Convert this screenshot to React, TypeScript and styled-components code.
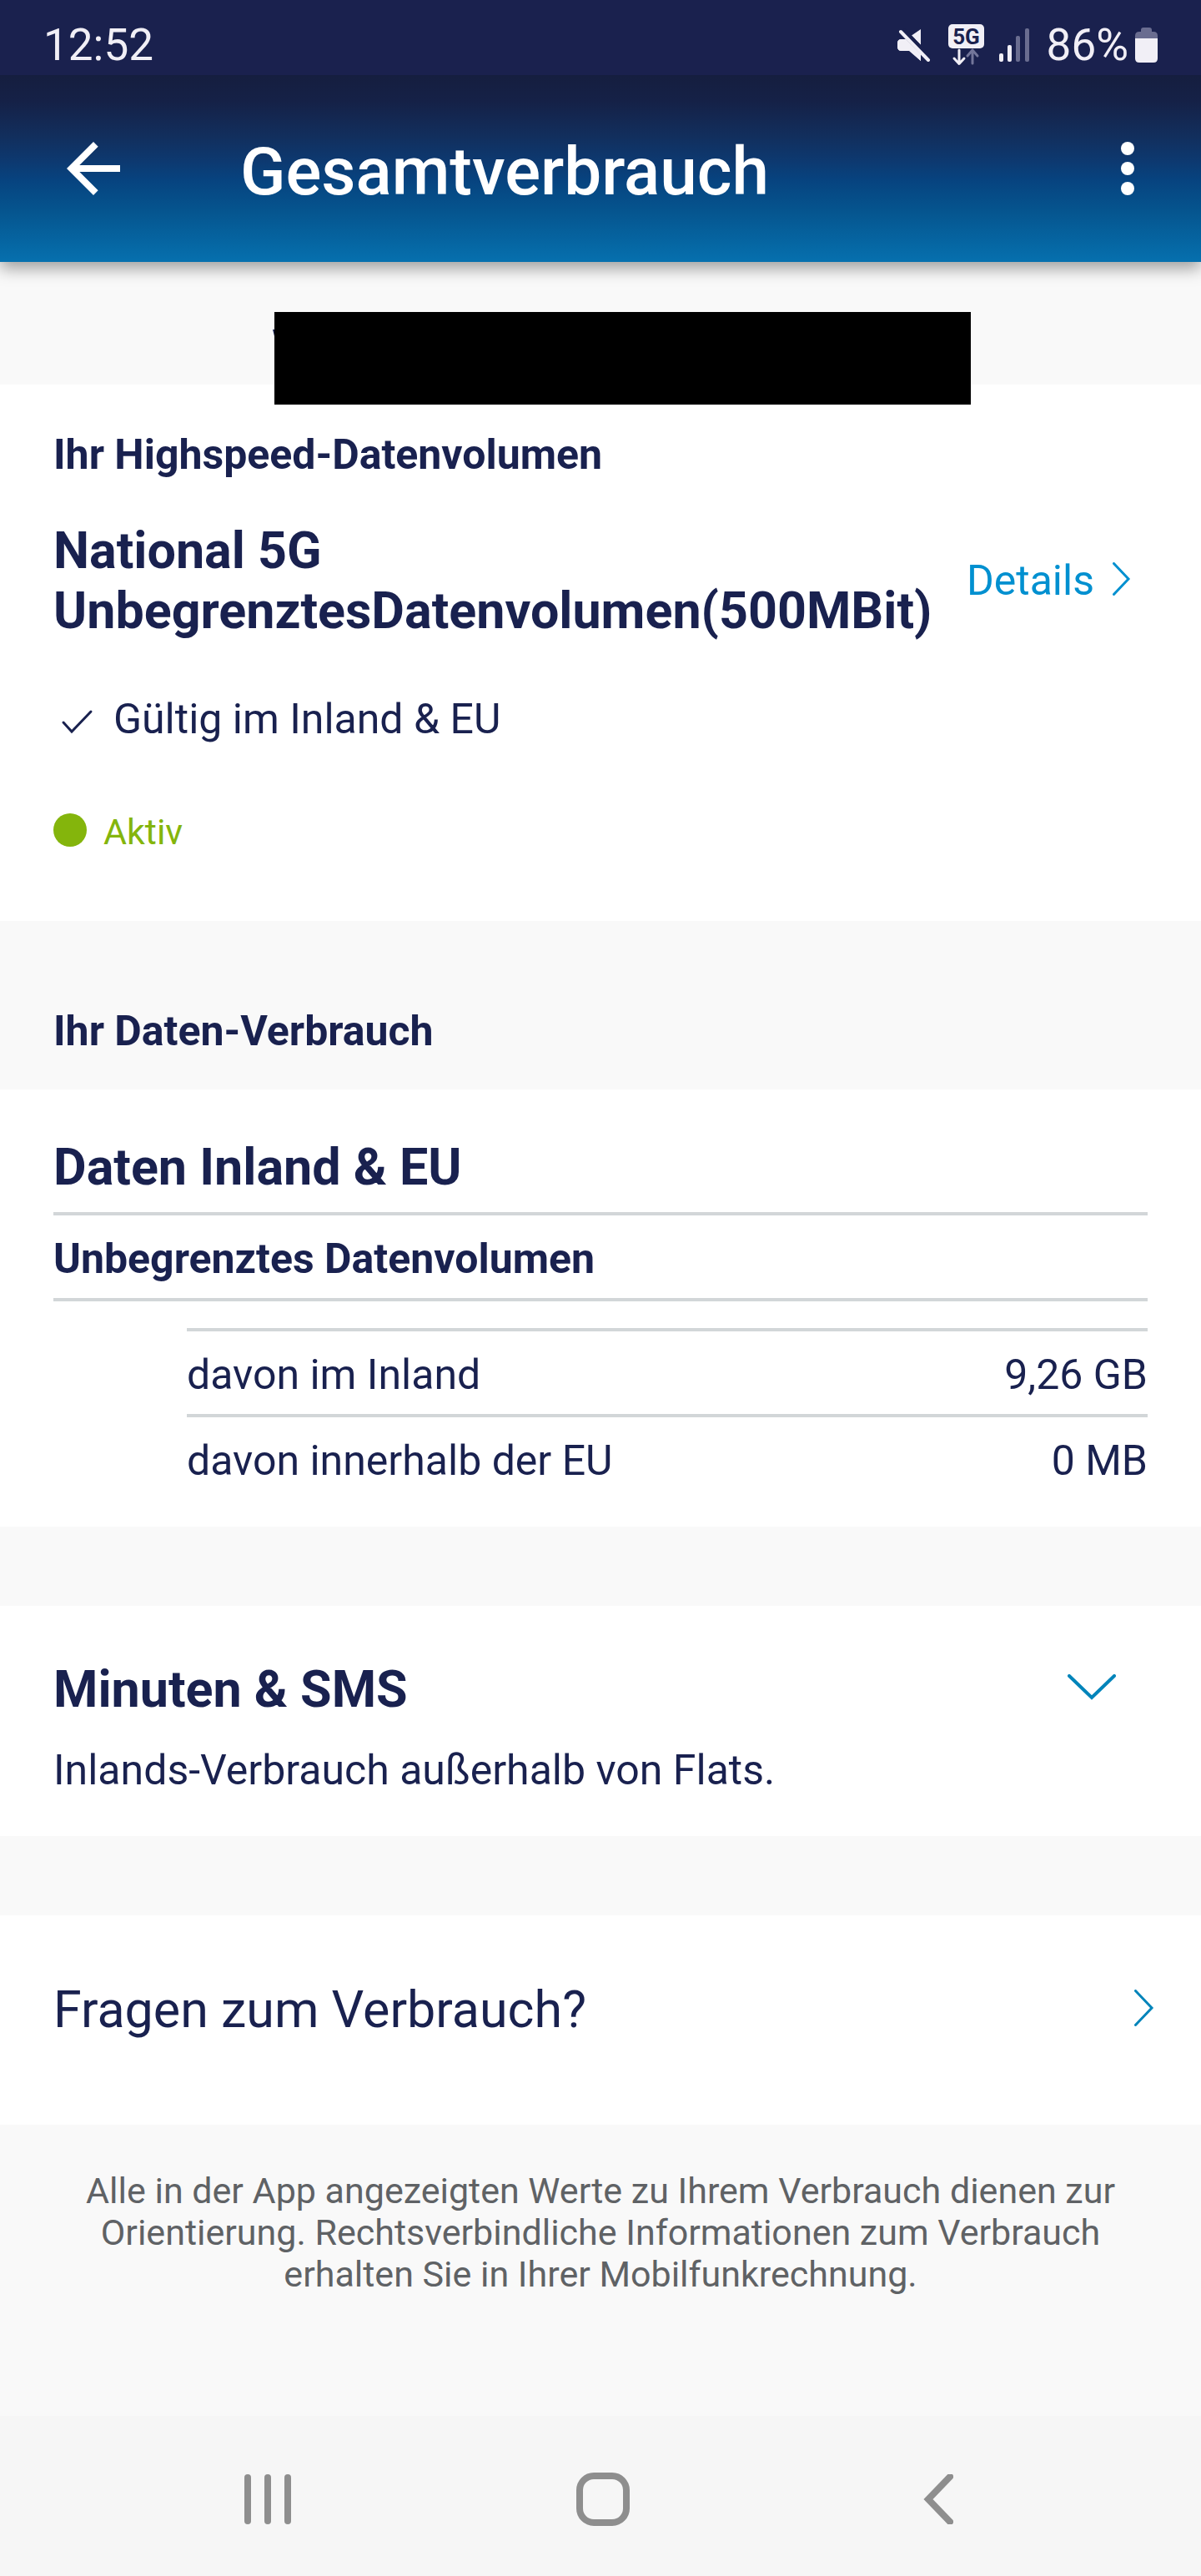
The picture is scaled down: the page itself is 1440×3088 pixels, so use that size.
import React, { useState } from "react";
import styled, { createGlobalStyle, ThemeProvider } from "styled-components";

const theme = {
  navy: "#19214f",
  link: "#0090d0",
  accent: "#0084ba",
  green: "#84b50c",
  rule: "#d2d6d8",
  canvas: "#f9f9f9",
  muted: "#5f6265",
  gutter: "64px",
};

const GlobalStyle = createGlobalStyle`
  *, *::before, *::after { box-sizing: border-box; }
  body {
    margin: 0;
    background: #f9f9f9;
    color: #19214f;
    font-family: Roboto, "Noto Sans", "Liberation Sans", sans-serif;
    font-size: 50px;
    line-height: 58px;
  }
  h1, h2, h3, p { margin: 0; }
  svg { display: block; flex: none; }
`;

const Page = styled.div`
  display: flex;
  flex-direction: column;
  min-height: 100vh;
`;

const StatusBar = styled.div`
  position: relative;
  z-index: 2;
  display: flex;
  align-items: center;
  justify-content: space-between;
  height: 90px;
  padding: 18px 52px 0;
  background: #1a214e;
  color: #f1eff6;
  font-size: 53px;
  line-height: 62px;
`;

const StatusIcons = styled.div`
  display: flex;
  align-items: center;
`;

const Battery = styled.span`
  display: flex;
  align-items: center;
  gap: 8px;
  margin-left: 21px;
`;

const AppBar = styled.header`
  position: relative;
  z-index: 1;
  display: flex;
  align-items: center;
  padding: 64px 40px;
  color: #fff;
  background: linear-gradient(
    to bottom,
    #151e3f 0%,
    #152147 14%,
    #122e5c 32%,
    #0d3970 46%,
    #07437f 56%,
    #05548e 72%,
    #0670ae 100%
  );
  box-shadow: 0 8px 18px rgba(0, 0, 0, 0.36);
`;

const IconButton = styled.button`
  display: flex;
  align-items: center;
  justify-content: center;
  padding: 0;
  border: 0;
  background: none;
  color: inherit;
`;

const BackButton = styled(IconButton)`
  margin: 0 128px 0 24px;
`;

const Title = styled.h1`
  flex: 1;
  padding-top: 8px;
  font-size: 80px;
  line-height: 88px;
  font-weight: 500;
`;

const Main = styled.main`
  flex: 1;
`;

const AccountStrip = styled.div`
  padding: 60px 276px 0 329px;
`;

/* The blacked-out account name hangs over the card below it. */
const Redaction = styled.div`
  position: relative;
  height: 111px;
  margin-bottom: -24px;
  background: #000;

  &::before {
    content: "";
    position: absolute;
    top: 21px;
    left: -2px;
    width: 2px;
    height: 8px;
    background: ${(p) => p.theme.navy};
    clip-path: polygon(0 0, 100% 0, 100% 100%);
  }
`;

const Card = styled.section<{ $top: number; $bottom: number }>`
  padding: ${(p) => p.$top}px ${(p) => p.theme.gutter} ${(p) => p.$bottom}px;
  background: #fff;

  & + & {
    margin-top: 95px;
  }
`;

const Label = styled.h2`
  font-size: 50px;
  line-height: 58px;
  font-weight: 700;
`;

const SectionLabel = styled(Label)`
  padding: 103px ${(p) => p.theme.gutter} 41px;
`;

const Heading = styled.h3`
  font-size: 61px;
  line-height: 72px;
  font-weight: 700;
`;

const SplitRow = styled.div<{ $end: number }>`
  display: flex;
  align-items: center;
  justify-content: space-between;
  padding-right: ${(p) => p.$end}px;
`;

const TariffRow = styled(SplitRow)`
  margin-top: 50px;
`;

const DetailsLink = styled.a`
  display: flex;
  align-items: center;
  gap: 22px;
  color: ${(p) => p.theme.link};
  text-decoration: none;
`;

const ChevronSvg = styled.svg`
  margin-bottom: 4px;
`;

const Validity = styled.p`
  display: flex;
  align-items: center;
  gap: 24px;
  margin-top: 65px;
  padding-left: 8px;
`;

const Status = styled.p`
  display: flex;
  align-items: center;
  gap: 20px;
  margin-top: 81px;
  color: ${(p) => p.theme.green};
  font-size: 43px;
  line-height: 50px;
`;

const Dot = styled.span`
  width: 40px;
  height: 40px;
  margin-bottom: 4px;
  border-radius: 50%;
  background: currentColor;
`;

const PlanName = styled.p`
  margin-top: 18px;
  padding: 23px 0 18px;
  border: solid ${(p) => p.theme.rule};
  border-width: 4px 0;
  font-weight: 700;
`;

const UsageTable = styled.table`
  width: calc(100% - 160px);
  margin: 32px 0 0 160px;
  border-spacing: 0;
`;

const usageCell = `
  padding: 23px 0 18px;
  border-top: 4px solid #d2d6d8;
  font-weight: 400;
`;

const UsageName = styled.th`
  ${usageCell}
  text-align: left;
`;

const UsageValue = styled.td`
  ${usageCell}
  text-align: right;
`;

const Note = styled.p`
  margin-top: 32px;
`;

const FaqLink = styled.a`
  display: flex;
  align-items: center;
  justify-content: space-between;
  margin-right: -8px;
  color: inherit;
  font-size: 61px;
  line-height: 72px;
  text-decoration: none;
`;

const Disclaimer = styled.p`
  padding: 54px 96px;
  color: ${(p) => p.theme.muted};
  font-size: 43px;
  line-height: 50px;
  text-align: center;
`;

const NavBar = styled.nav`
  display: grid;
  grid-template-columns: repeat(3, 1fr);
  height: 192px;
  padding: 8px 114px 0 120px;
  background: #f6f6f6;
  color: #8e8e8e;
`;

function MuteIcon() {
  return (
    <svg width="40" height="40" viewBox="0 0 40 40" fill="currentColor">
      <path d="M28 1v19L17 8.500zM5 13h5l18 18v8L15 27H5q-5 0-5-5v-4q0-5 5-5z" />
      <path d="M10 13L28 32v7L14 27H5q-5 0-5-5v-4q0-5 5-5z" />
      <path d="M7 1L40 35" stroke="#1a214e" strokeWidth="4" />
      <path d="M4 4l33 34" stroke="currentColor" strokeWidth="4" strokeLinecap="round" />
    </svg>
  );
}

function NetworkIcon() {
  return (
    <svg width="43" height="50" viewBox="0 0 43 50" style={{ marginLeft: 21 }}>
      <rect width="43" height="29" rx="5" fill="currentColor" />
      <text x="21.500" y="24" textAnchor="middle" fontSize="26" fontWeight="700" fill="#1a214e">
        5G
      </text>
      <g fill="none" strokeWidth="3" strokeLinecap="round" strokeLinejoin="round">
        <path d="M29 47V31m-6 7l6-7 6 7" stroke="#73769a" />
        <path d="M13 31v16m-6-6l6 6.500 6-6.500" stroke="currentColor" />
      </g>
    </svg>
  );
}

function SignalIcon() {
  return (
    <svg width="36" height="42" viewBox="0 0 36 42" fill="currentColor" style={{ marginLeft: 18 }}>
      <rect x="0" y="31" width="5" height="10" rx="2" />
      <rect x="10" y="21" width="5" height="20" rx="2" />
      <rect x="20" y="10" width="5" height="31" rx="2" fill="#6a6d90" />
      <rect x="31" y="1" width="5" height="40" rx="2" fill="#6a6d90" />
    </svg>
  );
}

function BatteryIcon() {
  return (
    <svg width="27" height="42" viewBox="0 0 27 42">
      <path d="M7 5V3q0-3 3-3h7q3 0 3 3v2h2q5 0 5 5v3H0v-3q0-5 5-5z" fill="#6a6d90" />
      <path d="M0 13h27v24q0 5-5 5H5q-5 0-5-5z" fill="currentColor" />
    </svg>
  );
}

type ChevronProps = { width: number; height: number; stroke: number; color: string; down?: boolean };

function Chevron({ width, height, stroke, color, down }: ChevronProps) {
  const h = stroke / 2;
  const d = down
    ? `M${h} ${h}L${width / 2} ${height - stroke}L${width - h} ${h}`
    : `M${h} ${h}L${width - stroke} ${height / 2}L${h} ${height - h}`;
  return (
    <ChevronSvg width={width} height={height} viewBox={`0 0 ${width} ${height}`}>
      <path d={d} fill="none" stroke={color} strokeWidth={stroke} strokeLinecap="round" />
    </ChevronSvg>
  );
}

const usage = [
  { name: "davon im Inland", value: "9,26 GB" },
  { name: "davon innerhalb der EU", value: "0 MB" },
];

export default function App() {
  const [open, setOpen] = useState(false);

  return (
    <ThemeProvider theme={theme}>
      <GlobalStyle />
      <Page>
        <StatusBar>
          <span>12:52</span>
          <StatusIcons>
            <MuteIcon />
            <NetworkIcon />
            <SignalIcon />
            <Battery>
              86%
              <BatteryIcon />
            </Battery>
          </StatusIcons>
        </StatusBar>

        <AppBar>
          <BackButton type="button" aria-label="Zurück">
            <svg width="96" height="96" viewBox="0 0 24 24" fill="currentColor">
              <path d="M20 11H7.830l5.590-5.590L12 4l-8 8 8 8 1.410-1.410L7.830 13H20v-2z" />
            </svg>
          </BackButton>
          <Title>Gesamtverbrauch</Title>
          <IconButton type="button" aria-label="Menü">
            <svg width="96" height="96" viewBox="0 0 24 24" fill="currentColor">
              <circle cx="12" cy="6" r="2" />
              <circle cx="12" cy="12" r="2" />
              <circle cx="12" cy="18" r="2" />
            </svg>
          </IconButton>
        </AppBar>

        <Main>
          <AccountStrip>
            <Redaction />
          </AccountStrip>

          <Card $top={55} $bottom={82}>
            <Label>Ihr Highspeed-Datenvolumen</Label>
            <TariffRow $end={20}>
              <Heading>
                National 5G
                <br />
                UnbegrenztesDatenvolumen(500MBit)
              </Heading>
              <DetailsLink href="#details">
                Details
                <Chevron width={22} height={40} stroke={3} color={theme.link} />
              </DetailsLink>
            </TariffRow>
            <Validity>
              <svg width="40" height="40" viewBox="0 0 40 40">
                <path
                  d="M4 24l10 11L37 11"
                  fill="none"
                  stroke="currentColor"
                  strokeWidth="3"
                  strokeLinecap="round"
                />
              </svg>
              Gültig im Inland &amp; EU
            </Validity>
            <Status>
              <Dot />
              Aktiv
            </Status>
          </Card>

          <SectionLabel>Ihr Daten-Verbrauch</SectionLabel>

          <Card $top={57} $bottom={32}>
            <Heading>Daten Inland &amp; EU</Heading>
            <PlanName>Unbegrenztes Datenvolumen</PlanName>
            <UsageTable>
              <tbody>
                {usage.map((row) => (
                  <tr key={row.name}>
                    <UsageName scope="row">{row.name}</UsageName>
                    <UsageValue>{row.value}</UsageValue>
                  </tr>
                ))}
              </tbody>
            </UsageTable>
          </Card>

          <Card $top={64} $bottom={50}>
            <SplitRow $end={38}>
              <Heading>Minuten &amp; SMS</Heading>
              <IconButton
                type="button"
                aria-label="Minuten & SMS anzeigen"
                aria-expanded={open}
                onClick={() => setOpen(!open)}
              >
                <Chevron width={58} height={32} stroke={4} color={theme.accent} down />
              </IconButton>
            </SplitRow>
            <Note>Inlands-Verbrauch außerhalb von Flats.</Note>
          </Card>

          <Card $top={77} $bottom={102}>
            <FaqLink href="#fragen">
              Fragen zum Verbrauch?
              <Chevron width={24} height={44} stroke={3} color={theme.accent} />
            </FaqLink>
          </Card>

          <Disclaimer>
            Alle in der App angezeigten Werte zu Ihrem Verbrauch dienen zur Orientierung.
            Rechtsverbindliche Informationen zum Verbrauch erhalten Sie in Ihrer
            Mobilfunkrechnung.
          </Disclaimer>
        </Main>

        <NavBar>
          <IconButton type="button" aria-label="Letzte Apps">
            <svg width="56" height="60" viewBox="0 0 56 60" fill="currentColor">
              <rect width="8" height="60" rx="4" />
              <rect x="24" width="8" height="60" rx="4" />
              <rect x="48" width="8" height="60" rx="4" />
            </svg>
          </IconButton>
          <IconButton type="button" aria-label="Startbildschirm">
            <svg width="64" height="64" viewBox="0 0 64 64">
              <rect
                x="4"
                y="4"
                width="56"
                height="56"
                rx="17"
                fill="none"
                stroke="currentColor"
                strokeWidth="8"
              />
            </svg>
          </IconButton>
          <IconButton type="button" aria-label="Zurück">
            <svg width="36" height="60" viewBox="0 0 36 60">
              <path
                d="M32 3L6 30l26 27"
                fill="none"
                stroke="currentColor"
                strokeWidth="8"
                strokeLinecap="round"
              />
            </svg>
          </IconButton>
        </NavBar>
      </Page>
    </ThemeProvider>
  );
}
